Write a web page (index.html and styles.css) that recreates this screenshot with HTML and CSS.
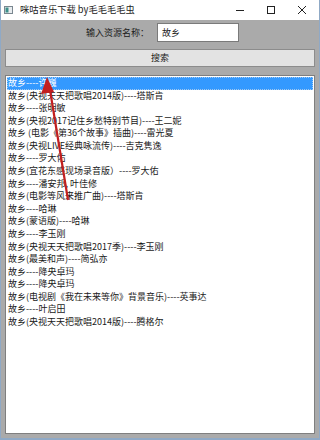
FILE: index.html
```html
<!DOCTYPE html>
<html lang="zh">
<head>
<meta charset="utf-8">
<title>咪咕音乐下载</title>
<link rel="stylesheet" href="styles.css">
</head>
<body>
<div class="window">
  <div class="titlebar">
    <svg class="app-icon" width="9" height="8" viewBox="0 0 9 8">
      <rect x="0.5" y="0.5" width="8" height="7" fill="#e8ecef" stroke="#7a8790"/>
      <rect x="1.5" y="1.5" width="3" height="5" fill="#3d8f8a"/>
    </svg>
    <span class="title">咪咕音乐下载 by毛毛毛毛虫</span>
    <div class="controls">
      <svg class="ctl" width="10" height="10" viewBox="0 0 10 10"><path d="M1 5.5H9" stroke="#222" stroke-width="1"/></svg>
      <svg class="ctl" width="10" height="10" viewBox="0 0 10 10"><rect x="1.5" y="1.5" width="7" height="7" fill="none" stroke="#222" stroke-width="1"/></svg>
      <svg class="ctl" width="10" height="10" viewBox="0 0 10 10"><path d="M1 1L9 9M9 1L1 9" stroke="#222" stroke-width="1"/></svg>
    </div>
  </div>
  <div class="client">
    <div class="query">
      <span class="label">输入资源名称：</span>
      <div class="textbox">故乡</div>
    </div>
    <div class="button">搜索</div>
    <div class="listbox">
      <div class="item selected">故乡----许巍</div>
      <div class="item">故乡(央视天天把歌唱2014版)----塔斯肯</div>
      <div class="item">故乡----张明敏</div>
      <div class="item">故乡(央视2017记住乡愁特别节目)----王二妮</div>
      <div class="item">故乡 (电影《第36个故事》插曲)----雷光夏</div>
      <div class="item">故乡(央视LIVE经典咏流传)----吉克隽逸</div>
      <div class="item">故乡----罗大佑</div>
      <div class="item">故乡(宜花东感现场录音版）----罗大佑</div>
      <div class="item">故乡----潘安邦, 叶佳修</div>
      <div class="item">故乡(电影等风来推广曲)----塔斯肯</div>
      <div class="item">故乡----哈琳</div>
      <div class="item">故乡(蒙语版)----哈琳</div>
      <div class="item">故乡----李玉刚</div>
      <div class="item">故乡(央视天天把歌唱2017季)----李玉刚</div>
      <div class="item">故乡(最美和声)----简弘亦</div>
      <div class="item">故乡----降央卓玛</div>
      <div class="item">故乡----降央卓玛</div>
      <div class="item">故乡(电视剧《我在未来等你》背景音乐)----英事达</div>
      <div class="item">故乡----叶启田</div>
      <div class="item">故乡(央视天天把歌唱2014版)----腾格尔</div>
    </div>
  </div>
  <svg class="arrow" width="320" height="440" viewBox="0 0 320 440">
    <path d="M68 200L50 90" stroke="#c21f1f" stroke-width="2.2" fill="none"/>
    <path d="M47 77L41 94L54 92Z" fill="#c21f1f"/>
  </svg>
</div>
</body>
</html>
```

FILE: styles.css
```css
* { box-sizing: border-box; }
html, body {
  margin: 0;
  padding: 0;
  width: 320px;
  height: 440px;
  overflow: hidden;
}
body {
  font-family: "Noto Sans CJK SC", "Noto Sans", sans-serif;
  font-size: 9px;
  color: #1a1a1a;
  background: #aaaaaa;
}
.window {
  position: relative;
  width: 320px;
  height: 440px;
  display: flex;
  flex-direction: column;
  border-left: 1px solid #8fa9c6;
  border-right: 1px solid #8fa9c6;
  border-bottom: 2px solid #8fa9c6;
}
.titlebar {
  height: 20px;
  background: #ffffff;
  display: flex;
  align-items: center;
  padding-left: 3px;
}
.app-icon { margin-right: 7px; margin-top: -1px; }
.title {
  font-size: 9.3px;
  color: #222;
  line-height: 1;
}
.controls {
  margin-left: auto;
  display: flex;
  align-items: center;
  gap: 21px;
  padding-right: 12px;
}
.ctl { display: block; }
.client {
  flex: 1;
  background: #aaaaaa;
  display: flex;
  flex-direction: column;
  padding: 3px 4px 4px 3px;
}
.query {
  display: flex;
  align-items: center;
  justify-content: center;
  gap: 8px;
  height: 19px;
  padding-left: 6px;
}
.label { line-height: 1; }
.textbox {
  width: 82px;
  height: 19px;
  background: #fff;
  border: 1px solid #7a7a7a;
  padding-left: 4px;
  line-height: 17px;
}
.button {
  margin-top: 7px;
  margin-left: 1px;
  height: 18px;
  background: #e3e3e3;
  border: 1px solid #8c8c8c;
  text-align: center;
  line-height: 16px;
}
.listbox {
  margin-top: 8px;
  margin-left: 1px;
  flex: 1;
  background: #fff;
  border: 1px solid #7f7f7f;
  padding: 1px 1px;
}
.item {
  height: 12.58px;
  line-height: 12.58px;
  padding-left: 1px;
  white-space: nowrap;
}
.item.selected {
  background: #3399ff;
  color: #fff;
  outline: 1px dotted #a0c8f0;
  outline-offset: -1px;
}
.arrow {
  position: absolute;
  left: -1px;
  top: 0;
  pointer-events: none;
}
```
